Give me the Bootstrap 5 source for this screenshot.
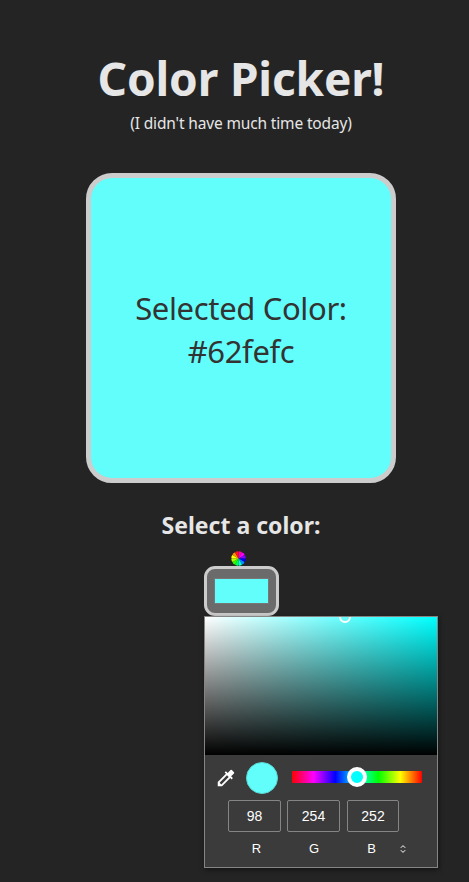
<!DOCTYPE html>
<html lang="en">
<head>
<meta charset="utf-8">
<meta name="viewport" content="width=device-width, initial-scale=1">
<title>Color Picker!</title>
<link href="https://cdn.jsdelivr.net/npm/bootstrap@5.3.0/dist/css/bootstrap.min.css" rel="stylesheet">
<style>
body{background:#242424;color:#e6e6e6;font-family:"Segoe UI","Noto Sans","Open Sans",sans-serif;height:882px;overflow:hidden}
.picker-page{width:310px;margin-left:86px;padding-top:48px}
.page-title{font-size:46px;line-height:60px;height:61px;font-weight:700;letter-spacing:-.15px}
.subtitle{font-size:15.5px;line-height:24px;letter-spacing:-.15px;margin-top:2px}
.preview{height:310px;margin-top:38px;border:5px solid #ccc;border-radius:26px;background:#62fefc;color:#333;font-size:31px;line-height:43px;font-weight:400;letter-spacing:-.35px;padding-top:3px}
.pick-title{font-size:23px;line-height:30px;margin-top:27px;font-weight:700}
.picker-control{width:75px;margin-left:118px;margin-top:11px}
.wheel{width:15px;height:15px;border-radius:50%;margin-left:26.5px;display:block}
.color-well{width:75px;height:50px;border:3px solid #ccc;border-radius:11px;background:#6b6b6b}
.well-fill{width:55px;height:26px;background:#62fefc;border:1px solid #777}
.popup{width:234px;height:252px;margin-left:118px;border:1px solid #858585;background:#3b3b3b;color:#fff;font-family:"Liberation Sans",Arial,sans-serif;font-size:14px;box-shadow:1px 2px 5px rgba(0,0,0,.45)}
.spectrum{height:138px;background:linear-gradient(to top,#000,transparent),linear-gradient(to right,#fff,#0ff)}
.spectrum-knob{width:12px;height:12px;border:2px solid #fff;border-radius:50%;left:134px;top:-6px}
.tools{height:45px;padding-left:10px}
.dropper{width:22px;height:22px}
.swatch{width:32px;height:32px;border-radius:50%;background:#62fefc;border:1px solid #59d8d6;margin-left:9px}
.hue{width:130px;height:12px;border-radius:1px;margin-left:14px;margin-bottom:2px;background:linear-gradient(to right,red,#f0f,#00f,#0ff,#0f0,#ff0,red)}
.hue-knob{width:20px;height:20px;left:55px;top:-4px;border:4px solid #fff;border-radius:50%;background:#0ff}
.channels{padding-left:23px;gap:6px}
.channel-value{width:53px;height:32px;border:1px solid #858585;border-radius:2px}
.channel-value:last-child{margin-left:1px;width:52px}
.channel-names{padding-left:25px;gap:4.5px;margin-top:7px;height:20px;font-size:13px}
.channel-name{width:53px}
.spinner-arrows{width:8px;height:10px;margin-left:-4px}
</style>
<script src="https://cdn.jsdelivr.net/npm/bootstrap@5.3.0/dist/js/bootstrap.bundle.min.js"></script>
</head>
<body>
<main class="picker-page">
  <h1 class="page-title text-center text-nowrap mb-0">Color Picker!</h1>
  <p class="subtitle text-center mb-0">(I didn't have much time today)</p>
  <section class="preview d-flex flex-column align-items-center justify-content-center text-nowrap">
    <span>Selected Color:</span><span>#62fefc</span>
  </section>
  <h2 class="pick-title text-center text-nowrap mb-0">Select a color:</h2>
  <div class="picker-control">
    <svg class="wheel" viewBox="-7.5 -7.5 15 15">
      <g id="sectors"></g>
      <circle r="7.2" fill="none" stroke="#242424" stroke-width=".8" stroke-dasharray="1 2.77" stroke-dashoffset=".5"/>
    </svg>
    <div class="color-well d-flex align-items-center justify-content-center"><div class="well-fill"></div></div>
  </div>
  <section class="popup">
    <div class="spectrum position-relative overflow-hidden"><div class="spectrum-knob position-absolute"></div></div>
    <div class="tools d-flex align-items-center">
      <svg class="dropper" viewBox="0 0 24 24" fill="#fff"><path d="M20.71 5.63l-2.34-2.34a1 1 0 0 0-1.41 0l-3.12 3.12-1.93-1.91-1.41 1.41 1.42 1.42L3 16.25V21h4.75l8.92-8.92 1.42 1.42 1.41-1.41-1.92-1.92 3.12-3.12c.4-.4.4-1.03.01-1.42zM6.92 19L5 17.08l8.06-8.06 1.92 1.92L6.92 19z"/></svg>
      <div class="swatch"></div>
      <div class="hue position-relative"><div class="hue-knob position-absolute"></div></div>
    </div>
    <div class="channels d-flex">
      <div class="channel-value d-flex align-items-center justify-content-center">98</div>
      <div class="channel-value d-flex align-items-center justify-content-center">254</div>
      <div class="channel-value d-flex align-items-center justify-content-center">252</div>
    </div>
    <div class="channel-names d-flex align-items-center text-center">
      <span class="channel-name">R</span><span class="channel-name">G</span><span class="channel-name">B</span>
      <svg class="spinner-arrows" viewBox="0 0 8 10" fill="none" stroke="#fff" stroke-width="1"><path d="M1.8 3.8L4 1.6l2.2 2.2M1.8 6.2L4 8.4l2.2-2.2"/></svg>
    </div>
  </section>
</main>
<script>
const colors=['#ff00b4','#ff00ff','#8b00ff','#0000ff','#0090ff','#00ffe0','#00ff50','#30ff00','#b0ff00','#ffff00','#ff9000','#ff1717'];
document.getElementById('sectors').innerHTML=colors.map((c,i)=>{
  const a=i*Math.PI/6,b=(i+1)*Math.PI/6,r=7.4;
  return `<path fill="${c}" d="M0 0L${r*Math.sin(a)} ${-r*Math.cos(a)}A${r} ${r} 0 0 1 ${r*Math.sin(b)} ${-r*Math.cos(b)}Z"/>`;
}).join('');
</script>
</body>
</html>
